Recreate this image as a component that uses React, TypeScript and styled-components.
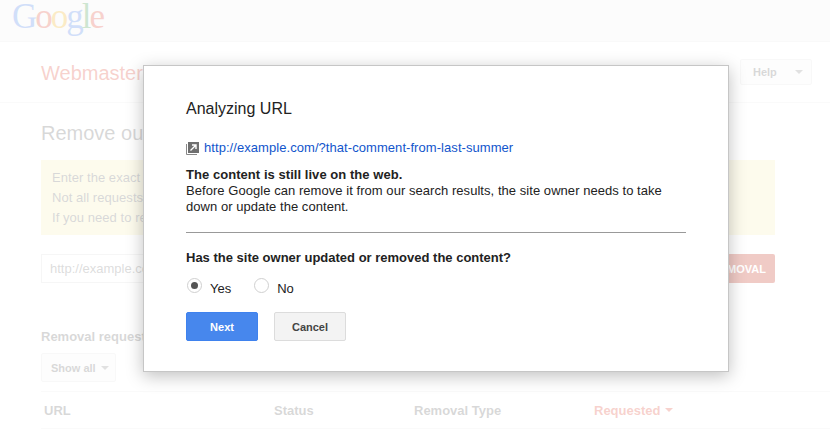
import styled, { createGlobalStyle } from "styled-components";

const GlobalStyle = createGlobalStyle`
  html, body {
    margin: 0;
    padding: 0;
    background: #fff;
    font-family: "Liberation Sans", Arial, sans-serif;
    font-size: 13px;
    color: #333;
    overflow: hidden;
  }
`;

const Page = styled.div`
  position: relative;
  width: 830px;
  height: 438px;
  overflow: hidden;
`;

const TopBar = styled.header`
  height: 42px;
  box-sizing: border-box;
  background: #f1f1f1;
  border-bottom: 1px solid #e5e5e5;
  padding: 2px 0 0 12px;
`;

const Logo = styled.div`
  font-family: "Liberation Serif", serif;
  font-size: 35px;
  line-height: 38px;
  letter-spacing: -2px;
  white-space: nowrap;
  margin-top: -4px;
`;

const LogoLetter = styled.span<{ $color: string }>`
  color: ${(p) => p.$color};
`;

const AppBar = styled.div`
  height: 61px;
  box-sizing: border-box;
  display: flex;
  align-items: center;
  justify-content: space-between;
  padding: 0 18px 0 41px;
  border-bottom: 1px solid #ebebeb;
`;

const AppTitle = styled.div`
  padding-top: 2px;
  color: #dd4b39;
  font-size: 20px;
`;

const HelpButton = styled.div`
  width: 72px;
  height: 26px;
  box-sizing: border-box;
  display: flex;
  align-items: center;
  justify-content: space-between;
  padding: 0 8px 0 12px;
  background: #f5f5f5;
  border: 1px solid #e3e3e3;
  border-radius: 2px;
  color: #666;
  font-size: 11px;
  font-weight: bold;
`;

const Caret = styled.span<{ $color?: string }>`
  display: inline-block;
  width: 0;
  height: 0;
  border-left: 4px solid transparent;
  border-right: 4px solid transparent;
  border-top: 4px solid ${(p) => p.$color ?? "#888"};
`;

const Content = styled.main`
  padding: 17px 55px 0 41px;
`;

const Heading = styled.h1`
  margin: 0;
  font-size: 20px;
  font-weight: normal;
  line-height: 26px;
  color: #666;
`;

const Notice = styled.div`
  margin-top: 14px;
  height: 75px;
  box-sizing: border-box;
  padding: 8px 11px;
  background: #f5eeb9;
  color: #666;
  line-height: 20px;
  letter-spacing: 0.05px;
`;

const RequestRow = styled.div`
  margin-top: 19px;
  display: flex;
  justify-content: space-between;
`;

const UrlInput = styled.div`
  width: 400px;
  height: 29px;
  box-sizing: border-box;
  padding: 0 8px;
  border: 1px solid #d9d9d9;
  color: #777;
  line-height: 27px;
`;

const RemovalButton = styled.div`
  height: 29px;
  padding: 0 9px;
  display: flex;
  align-items: center;
  background: #c4301f;
  border-radius: 2px;
  color: #fff;
  font-size: 11px;
  font-weight: bold;
  white-space: nowrap;
`;

const SectionTitle = styled.h2`
  margin: 46px 0 0;
  font-size: 13px;
  font-weight: bold;
  line-height: 16px;
  color: #666;
`;

const ShowAll = styled.div`
  margin-top: 8px;
  width: 75px;
  height: 29px;
  box-sizing: border-box;
  display: flex;
  align-items: center;
  gap: 5px;
  padding-left: 9px;
  background: #f5f5f5;
  border: 1px solid #e3e3e3;
  border-radius: 2px;
  color: #666;
  font-size: 11px;
  font-weight: bold;
`;

const TableHead = styled.div`
  margin: 9px -55px 0 0;
  height: 38px;
  box-sizing: border-box;
  display: grid;
  grid-template-columns: 230px 140px 180px 1fr;
  align-items: center;
  padding-left: 3px;
  border-top: 1px solid #ebebeb;
  border-bottom: 1px solid #ebebeb;
  color: #666;
  font-size: 13px;
  font-weight: bold;
`;

const SortedColumn = styled.div`
  display: flex;
  align-items: center;
  gap: 5px;
  color: #dd4b39;
`;

const Scrim = styled.div`
  position: absolute;
  inset: 0;
  background: rgba(255, 255, 255, 0.75);
`;

const Dialog = styled.div`
  position: absolute;
  left: 143px;
  top: 65px;
  width: 586px;
  height: 307px;
  box-sizing: border-box;
  padding: 33px 42px 0;
  background: #fff;
  border: 1px solid #c6c6c6;
  box-shadow: 0 4px 16px rgba(0, 0, 0, 0.25);
  color: #222;
`;

const DialogTitle = styled.h3`
  margin: 0;
  font-size: 16px;
  font-weight: normal;
  line-height: 20px;
  color: #222;
`;

const LinkRow = styled.div`
  margin-top: 18px;
  display: flex;
  align-items: center;
  gap: 5px;
  height: 20px;
`;

const UrlLink = styled.a`
  color: #1155cc;
  text-decoration: none;
  letter-spacing: 0.06px;
`;

const Message = styled.div`
  margin-top: 10px;
  line-height: 16px;
  letter-spacing: 0.05px;
`;

const Divider = styled.hr`
  margin: 17px 0 0;
  border: 0;
  border-top: 1px solid #999;
`;

const Question = styled.div`
  margin-top: 17px;
  font-weight: bold;
  line-height: 16px;
`;

const RadioRow = styled.div`
  margin-top: 12px;
  display: flex;
  gap: 23px;
  padding-left: 1px;
`;

const RadioOption = styled.label`
  display: flex;
  gap: 8px;
  line-height: 16px;
`;

const RadioCircle = styled.span<{ $checked?: boolean }>`
  width: 15px;
  height: 15px;
  box-sizing: border-box;
  display: flex;
  align-items: center;
  justify-content: center;
  border: 1px solid #d0d0d0;
  border-radius: 50%;
  background: #fff;
  &::after {
    content: "";
    display: ${(p) => (p.$checked ? "block" : "none")};
    width: 7px;
    height: 7px;
    border-radius: 50%;
    background: #555;
  }
`;

const RadioText = styled.span`
  margin-top: 3px;
`;

const Actions = styled.div`
  margin-top: 15px;
  display: flex;
  gap: 16px;
`;

const DialogButton = styled.button<{ $primary?: boolean }>`
  width: 72px;
  height: 29px;
  padding: 0;
  box-sizing: border-box;
  border-radius: 2px;
  border: 1px solid ${(p) => (p.$primary ? "#3f82ee" : "#dcdcdc")};
  background: ${(p) => (p.$primary ? "#4787ed" : "#f3f3f3")};
  color: ${(p) => (p.$primary ? "#fff" : "#444")};
  font-family: inherit;
  font-size: 11px;
  font-weight: bold;
`;

const IconSvg = styled.svg`
  margin-top: 2px;
  flex: none;
`;

const logoLetters: [string, string][] = [
  ["G", "#4a7fe8"],
  ["o", "#dd4b39"],
  ["o", "#efb11d"],
  ["g", "#4a7fe8"],
  ["l", "#3d9a4a"],
  ["e", "#dd4b39"],
];

const ExternalIcon = () => (
  <IconSvg width="13" height="13" viewBox="0 0 13 13" aria-hidden="true">
    <path d="M.5 2V12.5H11" fill="none" stroke="#888" />
    <rect x="2" y="0" width="11" height="11" fill="#6f6f6f" />
    <path d="M4.5 8.5 9.5 3.5M6 3H10V7" fill="none" stroke="#fff" strokeWidth="1.4" />
  </IconSvg>
);

export default function App() {
  return (
    <Page>
      <GlobalStyle />
      <TopBar>
        <Logo>
          {logoLetters.map(([letter, color], i) => (
            <LogoLetter key={i} $color={color}>
              {letter}
            </LogoLetter>
          ))}
        </Logo>
      </TopBar>
      <AppBar>
        <AppTitle>Webmaster Tools</AppTitle>
        <HelpButton>
          Help
          <Caret />
        </HelpButton>
      </AppBar>
      <Content>
        <Heading>Remove outdated content</Heading>
        <Notice>
          Enter the exact URL of the page.
          <br />
          Not all requests can be accepted.
          <br />
          If you need to remove other content, contact the site owner.
        </Notice>
        <RequestRow>
          <UrlInput>http://example.com/</UrlInput>
          <RemovalButton>REQUEST REMOVAL</RemovalButton>
        </RequestRow>
        <SectionTitle>Removal requests</SectionTitle>
        <ShowAll>
          Show all
          <Caret />
        </ShowAll>
        <TableHead>
          <div>URL</div>
          <div>Status</div>
          <div>Removal Type</div>
          <SortedColumn>
            Requested
            <Caret $color="#dd4b39" />
          </SortedColumn>
        </TableHead>
      </Content>
      <Scrim />
      <Dialog>
        <DialogTitle>Analyzing URL</DialogTitle>
        <LinkRow>
          <ExternalIcon />
          <UrlLink href="#">http://example.com/?that-comment-from-last-summer</UrlLink>
        </LinkRow>
        <Message>
          <strong>The content is still live on the web.</strong>
          <br />
          Before Google can remove it from our search results, the site owner needs to take
          <br />
          down or update the content.
        </Message>
        <Divider />
        <Question>Has the site owner updated or removed the content?</Question>
        <RadioRow>
          <RadioOption>
            <RadioCircle $checked />
            <RadioText>Yes</RadioText>
          </RadioOption>
          <RadioOption>
            <RadioCircle />
            <RadioText>No</RadioText>
          </RadioOption>
        </RadioRow>
        <Actions>
          <DialogButton $primary>Next</DialogButton>
          <DialogButton>Cancel</DialogButton>
        </Actions>
      </Dialog>
    </Page>
  );
}
